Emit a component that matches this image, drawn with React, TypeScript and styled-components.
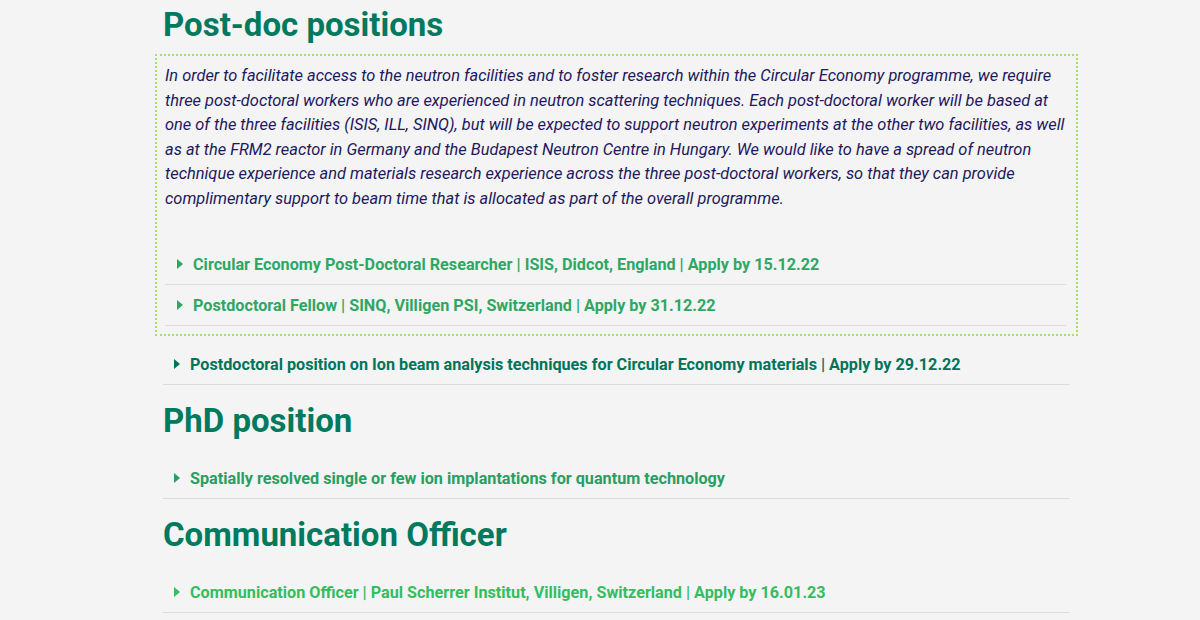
import React from 'react';
import styled, { createGlobalStyle } from 'styled-components';

const GlobalStyle = createGlobalStyle`
  html, body {
    margin: 0;
    padding: 0;
    background: #f4f4f4;
  }
  body {
    font-family: Roboto, "Liberation Sans", Arial, sans-serif;
  }
`;

const Page = styled.div`
  width: 907px;
  padding: 5px 0 0 163px;
`;

const Heading = styled.h2<{ $first?: boolean }>`
  margin: ${p => (p.$first ? '0 0 9px' : '16px 0 17px')};
  font-family: Roboto, "Liberation Sans", Arial, sans-serif;
  font-size: 33px;
  line-height: 40px;
  font-weight: 700;
  color: #007a5e;
`;

const Highlight = styled.div`
  margin: 0 -8px 8px;
  padding: 8px 10px 8px 8px;
  border: 2px dotted #a6e06a;
`;

const Intro = styled.p`
  margin: 0 0 33px;
  font-size: 16.4px;
  line-height: 24.5px;
  font-style: italic;
  color: #22185e;
`;

const List = styled.ul`
  list-style: none;
  margin: 0;
  padding: 0;
`;

const Item = styled.li<{ $inset?: boolean; $color: string }>`
  display: flex;
  align-items: center;
  gap: 10px;
  height: 40px;
  padding-left: ${p => (p.$inset ? '12px' : '11px')};
  border-bottom: 1px solid #dcdcdc;
  color: ${p => p.$color};
  font-size: 16.2px;
  font-weight: 700;
  cursor: pointer;
`;

const Caret = styled.span`
  width: 0;
  height: 0;
  border-top: 5px solid transparent;
  border-bottom: 5px solid transparent;
  border-left: 6px solid currentColor;
  flex-shrink: 0;
`;

type Job = { title: string; color: string };

const boxed: Job[] = [
  {
    title: 'Circular Economy Post-Doctoral Researcher | ISIS, Didcot, England | Apply by 15.12.22',
    color: '#2fa763',
  },
  {
    title: 'Postdoctoral Fellow | SINQ, Villigen PSI, Switzerland | Apply by 31.12.22',
    color: '#2fa763',
  },
];

const JobItem: React.FC<{ job: Job; inset?: boolean }> = ({ job, inset }) => (
  <Item $inset={inset} $color={job.color}>
    <Caret />
    {job.title}
  </Item>
);

export default function App() {
  return (
    <>
      <GlobalStyle />
      <Page>
        <Heading $first>Post-doc positions</Heading>
        <Highlight>
          <Intro>
            In order to facilitate access to the neutron facilities and to foster research within the
            Circular Economy programme, we require three post-doctoral workers who are experienced in
            neutron scattering techniques. Each post-doctoral worker will be based at one of the three
            facilities (ISIS, ILL, SINQ), but will be expected to support neutron experiments at the
            other two facilities, as well as at the FRM2 reactor in Germany and the Budapest Neutron
            Centre in Hungary. We would like to have a spread of neutron technique experience and
            materials research experience across the three post-doctoral workers, so that they can
            provide complimentary support to beam time that is allocated as part of the overall
            programme.
          </Intro>
          <List>
            {boxed.map(job => (
              <JobItem key={job.title} job={job} inset />
            ))}
          </List>
        </Highlight>
        <List>
          <JobItem
            job={{
              title:
                'Postdoctoral position on Ion beam analysis techniques for Circular Economy materials | Apply by 29.12.22',
              color: '#00745a',
            }}
          />
        </List>

        <Heading>PhD position</Heading>
        <List>
          <JobItem
            job={{
              title: 'Spatially resolved single or few ion implantations for quantum technology',
              color: '#2a9e62',
            }}
          />
        </List>

        <Heading>Communication Officer</Heading>
        <List>
          <JobItem
            job={{
              title: 'Communication Officer | Paul Scherrer Institut, Villigen, Switzerland | Apply by 16.01.23',
              color: '#34bd5f',
            }}
          />
        </List>
      </Page>
    </>
  );
}
